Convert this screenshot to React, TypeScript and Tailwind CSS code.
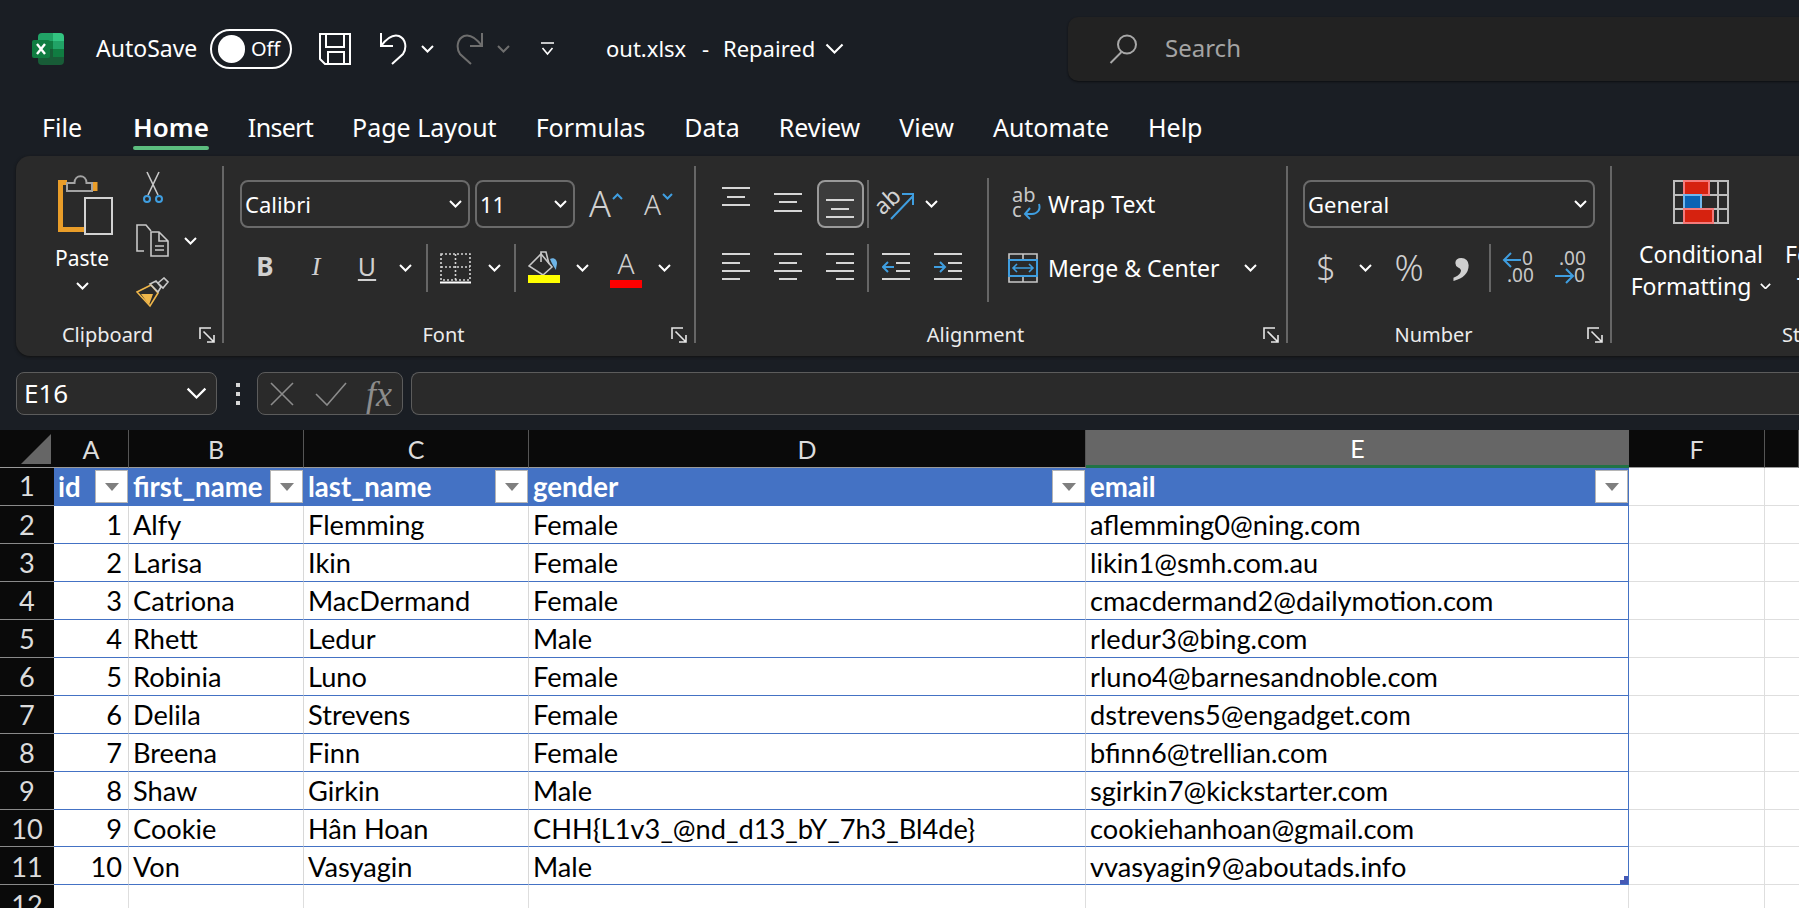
import React from "react";

const rows = [
  ["1", "Alfy", "Flemming", "Female", "aflemming0@ning.com"],
  ["2", "Larisa", "Ikin", "Female", "likin1@smh.com.au"],
  ["3", "Catriona", "MacDermand", "Female", "cmacdermand2@dailymotion.com"],
  ["4", "Rhett", "Ledur", "Male", "rledur3@bing.com"],
  ["5", "Robinia", "Luno", "Female", "rluno4@barnesandnoble.com"],
  ["6", "Delila", "Strevens", "Female", "dstrevens5@engadget.com"],
  ["7", "Breena", "Finn", "Female", "bfinn6@trellian.com"],
  ["8", "Shaw", "Girkin", "Male", "sgirkin7@kickstarter.com"],
  ["9", "Cookie", "Hân Hoan", "CHH{L1v3_@nd_d13_bY_7h3_Bl4de}", "cookiehanhoan@gmail.com"],
  ["10", "Von", "Vasyagin", "Male", "vvasyagin9@aboutads.info"],
];

const headers = ["id", "first_name", "last_name", "gender", "email"];
const columns = ["A", "B", "C", "D", "E", "F", ""];
const tabs = ["Insert", "Page Layout", "Formulas", "Data", "Review", "View", "Automate", "Help"];

const Chevron = ({ className = "text-white", w = 13 }: { className?: string; w?: number }) => (
  <svg width={w} height={(w * 8) / 13} viewBox="0 0 13 8" fill="none" stroke="currentColor" strokeWidth={w > 13 ? 1.4 : 2} className={className}>
    <path d="M1 1l5.5 5.5L12 1" />
  </svg>
);

const Launcher = () => (
  <svg width="16" height="16" viewBox="0 0 16 16" fill="none" stroke="#e6e6e6" strokeWidth="1.6">
    <path d="M1 12V1h11M4.5 4.5L15 15M15 8v7H8" />
  </svg>
);

const ExcelLogo = () => (
  <svg width="32" height="32" viewBox="0 0 32 32">
    <path d="M10 0h11v8H6V4a4 4 0 0 1 4-4z" fill="#21a366" />
    <path d="M21 0h7a4 4 0 0 1 4 4v4H21z" fill="#33c481" />
    <rect x="6" y="8" width="15" height="8" fill="#107c41" />
    <rect x="21" y="8" width="11" height="8" fill="#21a366" />
    <rect x="6" y="16" width="15" height="8" fill="#185c37" />
    <rect x="21" y="16" width="11" height="8" fill="#107c41" />
    <path d="M6 24h26v4a4 4 0 0 1-4 4H10a4 4 0 0 1-4-4z" fill="#185c37" />
    <rect x="0" y="7" width="18" height="18" rx="2" fill="#107c41" />
    <path d="M5 11l8 10M13 11l-8 10" stroke="#fff" strokeWidth="2.4" />
  </svg>
);

const SaveIcon = () => (
  <svg width="32" height="32" viewBox="0 0 32 32" fill="none" stroke="#fff" strokeWidth="2">
    <path d="M1 1h30v30H6l-5-5zM7 1v13h18V1M9 31V19h16v12" />
  </svg>
);

const UndoIcon = ({ color, flip }: { color: string; flip?: boolean }) => (
  <svg width="28" height="33" viewBox="0 0 28 33" fill="none" stroke={color} strokeWidth="2" className={flip ? "-scale-x-100" : ""}>
    <path d="M2 1v13h12M2 14C8 6 14 2 20 4c7 3 8 12 4 18L13 32" />
  </svg>
);

const CustomizeIcon = () => (
  <svg width="15" height="14" viewBox="0 0 15 14" fill="none" stroke="#fff" strokeWidth="1.6">
    <path d="M1 1h13M2.5 6l5 6 5-6" />
  </svg>
);

const SearchIcon = () => (
  <svg width="28" height="30" viewBox="0 0 28 30" fill="none" stroke="#a8a8a8" strokeWidth="2">
    <circle cx="18" cy="10.5" r="9" />
    <path d="M12.5 18L1.5 29" />
  </svg>
);

const PasteIcon = () => (
  <svg width="56" height="62" viewBox="0 0 56 62" fill="none">
    <path d="M9 8.5H2.5v47H26" stroke="#e99d29" strokeWidth="5" />
    <path d="M37 8v9" stroke="#e99d29" strokeWidth="5" />
    <path d="M9 17V9h7.5c0-9 12-9 12 0H34v8z" stroke="#a3a3a3" strokeWidth="2" />
    <rect x="27" y="24" width="27" height="36" stroke="#d2d2d2" strokeWidth="2" />
  </svg>
);

const ScissorsIcon = () => (
  <svg width="22" height="33" viewBox="0 0 22 33" fill="none">
    <path d="M5 1l11 23M17 1L6 24" stroke="#c8c8c8" strokeWidth="1.6" />
    <circle cx="5" cy="28" r="3" stroke="#3f9ee0" strokeWidth="2" />
    <circle cx="17" cy="28" r="3" stroke="#3f9ee0" strokeWidth="2" />
  </svg>
);

const CopyIcon = () => (
  <svg width="33" height="33" viewBox="0 0 33 33" fill="none" stroke="#c8c8c8" strokeWidth="1.6">
    <path d="M8 27H1V1h9l5 6" />
    <path d="M15 8h8l9 9v15H15zM23 8v9h9" />
    <path d="M19 22h9M19 26h9" />
  </svg>
);

const BrushIcon = () => (
  <svg width="33" height="31" viewBox="0 0 33 31" fill="none">
    <path d="M1 15l14-7 7 8-8 13z" fill="#2a2a2a" stroke="#efb64a" strokeWidth="1.6" />
    <path d="M5 17l12 0-4 11z" fill="#efb64a" />
    <path d="M14 7l6-3 5 6-3 5zM22 6l6-5 4 4-5 6z" stroke="#c8c8c8" strokeWidth="1.6" />
  </svg>
);

const BorderIcon = () => (
  <svg width="31" height="31" viewBox="0 0 31 31" fill="none">
    <path d="M1 1h29v26H1zM1 14h29M15.5 1v26" stroke="#d4d4d4" strokeWidth="1.6" strokeDasharray="2 2" />
    <path d="M0 29.5h31" stroke="#fff" strokeWidth="2" />
  </svg>
);

const FillIcon = () => (
  <svg width="32" height="34" viewBox="0 0 32 34" fill="none">
    <path d="M1 15L13 3l11 13-9 8z" stroke="#c8c8c8" strokeWidth="1.6" />
    <path d="M13 11V1h5l3 12" stroke="#c8c8c8" strokeWidth="1.6" />
    <path d="M22 8c4-2 7 1 7 4 0 2-1 4-1 7-2-3-4-6-6-11z" fill="#6eb4e6" />
    <rect y="24" width="32" height="8" fill="#ffff00" />
  </svg>
);

const AlignIcon = ({ lines }: { lines: [number, number, number][] }) => (
  <svg width="28" height="48" viewBox="0 0 28 48" stroke="#d6d6d6" strokeWidth="2">
    {lines.map(([a, b, y]) => (
      <path key={y} d={`M${a} ${y}H${b}`} />
    ))}
  </svg>
);

const IndentIcon = ({ out }: { out?: boolean }) => (
  <svg width="28" height="48" viewBox="0 0 28 48" fill="none">
    <path d="M0 10h28M14 19h14M14 27h14M0 35h28" stroke="#d6d6d6" strokeWidth="2" />
    <path d={out ? "M12 23H1M6 18l-5 5 5 5" : "M0 23h11M6 18l5 5-5 5"} stroke="#3f9ee0" strokeWidth="2" />
  </svg>
);

const OrientIcon = () => (
  <svg width="36" height="36" viewBox="0 0 36 36" fill="none" className="overflow-visible">
    <text x="-3" y="21" transform="rotate(-42 12 17)" fontSize="23" fill="#d2d2d2" fontFamily="Noto Sans, sans-serif">ab</text>
    <path d="M12 33L34 10M23 8h11v11" stroke="#3f9ee0" strokeWidth="2" />
  </svg>
);

const WrapIcon = () => (
  <svg width="30" height="34" viewBox="0 0 30 34" fill="none" className="overflow-visible">
    <text x="0" y="15" fontSize="20" fill="#c8c8c8" fontFamily="Noto Sans, sans-serif">ab</text>
    <text x="0" y="30" fontSize="20" fill="#c8c8c8" fontFamily="Noto Sans, sans-serif">c</text>
    <path d="M27 17c2 6-2 10-7 10h-6M18 21l-5 6 5 5" stroke="#3f9ee0" strokeWidth="2" />
  </svg>
);

const MergeIcon = () => (
  <svg width="30" height="30" viewBox="0 0 30 30" fill="none">
    <path d="M1 1h28v28H1zM15 1v6M15 23v6" stroke="#c8c8c8" strokeWidth="1.6" />
    <rect x="1" y="7" width="28" height="16" stroke="#3f9ee0" strokeWidth="2" fill="#2a2a2a" />
    <path d="M5 15h20M9 11l-4 4 4 4M21 11l4 4-4 4" stroke="#3f9ee0" strokeWidth="1.6" />
  </svg>
);

const DecimalIcon = ({ more }: { more?: boolean }) => (
  <svg width="32" height="36" viewBox="0 0 32 36" fill="none" className="overflow-visible">
    <text x={more ? 5 : 20} y="15" fontSize="19" fill="#c8c8c8" fontFamily="Noto Sans, sans-serif">{more ? ".00" : "0"}</text>
    <text x={more ? 20 : 5} y="32" fontSize="19" fill="#c8c8c8" fontFamily="Noto Sans, sans-serif">{more ? "0" : ".00"}</text>
    {more ? (
      <path d="M1 26h17M12 19l7 7-7 7" stroke="#3f9ee0" strokeWidth="2" />
    ) : (
      <path d="M19 10H2M9 3l-7 7 7 7" stroke="#3f9ee0" strokeWidth="2" />
    )}
  </svg>
);

const ConditionalIcon = () => (
  <svg width="56" height="44" viewBox="0 0 56 44" fill="none">
    <path d="M1 1h54v42H1zM1 15h54M1 29h54M11 1v42M27 1v42M45 1v42" stroke="#bdbdbd" strokeWidth="2" />
    <rect x="11" y="1" width="25" height="14" fill="#d6220f" stroke="#f47a7a" strokeWidth="2" />
    <rect x="11" y="15" width="17" height="14" fill="#0a63b4" stroke="#6fb7ee" strokeWidth="2" />
    <rect x="11" y="29" width="29" height="14" fill="#d6220f" stroke="#f47a7a" strokeWidth="2" />
  </svg>
);

const FilterButton = () => (
  <div className="ml-auto mr-[1px] flex h-[33px] w-[33px] shrink-0 items-center justify-center border border-[#b5b5b5] bg-white">
    <div className="h-0 w-0 border-x-[7px] border-t-[8px] border-x-transparent border-t-[#7f7f7f]" />
  </div>
);

const Separator = ({ className = "" }: { className?: string }) => <div className={`w-[2px] bg-[#666666] ${className}`} />;
const GroupDivider = () => <div className="mb-[13px] mt-[10px] w-[2px] shrink-0 bg-[#666666]" />;

const GroupFooter = ({ label, labelClass = "mr-[24px]" }: { label: string; labelClass?: string }) => (
  <div className="mt-auto mb-[13px] grid grid-cols-[1fr_auto_1fr] items-end pr-[7px] text-[20px] leading-[24px] text-[#ececec]">
    <div />
    <span className={`mb-[-4px] ${labelClass}`}>{label}</span>
    <div className="justify-self-end">
      <Launcher />
    </div>
  </div>
);

const Combo = ({ label, className }: { label: string; className: string }) => (
  <div className={`flex h-[48px] items-center justify-between rounded-[8px] border-2 border-[#6a6a6a] pl-[3px] pr-[6px] text-[22px] text-white ${className}`}>
    <span>{label}</span>
    <Chevron />
  </div>
);

const Box = ({ className, children }: { className: string; children?: React.ReactNode }) => (
  <div className={`flex h-[48px] shrink-0 items-center justify-center ${className}`}>{children}</div>
);

export default function App() {
  return (
    <div className="flex h-[908px] w-[1799px] flex-col overflow-hidden bg-[#1a1e24] font-['Noto_Sans',sans-serif]">
      {/* Title bar */}
      <div className="flex h-[97px] shrink-0 items-center pl-[32px] text-white">
        <ExcelLogo />
        <span className="ml-[32px] w-[114px] text-[23px]">AutoSave</span>
        <div className="flex h-[40px] w-[82px] items-center rounded-full border-2 border-white pl-[6px]">
          <div className="h-[28px] w-[27px] rounded-full bg-white" />
          <span className="ml-[6px] text-[20px]">Off</span>
        </div>
        <div className="ml-[27px]"><SaveIcon /></div>
        <div className="ml-[28px]"><UndoIcon color="#ffffff" /></div>
        <div className="ml-[14px]"><Chevron /></div>
        <div className="ml-[22px]"><UndoIcon color="#6e6e6e" flip /></div>
        <div className="ml-[13px]"><Chevron className="text-[#6e6e6e]" /></div>
        <div className="ml-[30px]"><CustomizeIcon /></div>
        <span className="ml-[51px] w-[96px] text-[22px]">out.xlsx</span>
        <span className="w-[21px] text-[22px]">-</span>
        <span className="w-[102px] text-[22px]">Repaired</span>
        <Chevron w={19} />
        <div className="ml-[224px] flex h-[64px] flex-1 items-center rounded-l-[10px] bg-[#222222] pl-[41px] shadow-[0_1px_2px_#0d0f12]">
          <SearchIcon />
          <span className="ml-[28px] mt-[-2px] text-[24px] text-[#a4a4a4]">Search</span>
        </div>
      </div>

      {/* Tabs */}
      <div className="flex h-[59px] shrink-0 items-start gap-[39px] pl-[42px] text-[25px] leading-[60px] text-white">
        <span className="mr-[12px]">File</span>
        <div className="relative text-[26px] font-semibold">
          Home
          <div className="absolute bottom-[7px] left-0 right-0 h-[4px] rounded-full bg-[#5cbd7f]" />
        </div>
        {tabs.map((tab) => (
          <span key={tab} className={tab === "Insert" ? "tracking-[-0.7px]" : ""}>{tab}</span>
        ))}
      </div>

      {/* Ribbon */}
      <div className="ml-[16px] flex h-[200px] shrink-0 rounded-l-[14px] bg-[#2a2a2a] shadow-[0_1px_3px_#111]">
        {/* Clipboard */}
        <div className="flex w-[206px] shrink-0 flex-col">
          <div className="flex">
            <div className="ml-[22px] flex w-[88px] flex-col items-center pl-[8px] pt-[18px]">
              <PasteIcon />
              <span className="ml-[-8px] mt-[6px] text-[21px] leading-[32px] text-white">Paste</span>
              <div className="ml-[-8px] mt-[8px]"><Chevron /></div>
            </div>
            <div className="ml-[10px] flex flex-col pt-[15px]">
              <div className="ml-[6px]"><ScissorsIcon /></div>
              <div className="mt-[20px] flex items-center">
                <CopyIcon />
                <div className="ml-[15px]"><Chevron /></div>
              </div>
              <div className="mt-[20px]"><BrushIcon /></div>
            </div>
          </div>
          <GroupFooter label="Clipboard" labelClass="mr-[16px]" />
        </div>
        <GroupDivider />

        {/* Font */}
        <div className="flex w-[470px] shrink-0 flex-col">
          <div className="flex items-center pl-[16px] pt-[24px]">
            <Combo label="Calibri" className="w-[230px]" />
            <Combo label="11" className="ml-[5px] w-[100px]" />
            <div className="ml-[14px] flex h-[48px] w-[48px] items-center text-[36px] font-light text-[#d0d0d0]">
              A
              <svg width="11" height="7" viewBox="0 0 11 7" fill="none" stroke="#3f9ee0" strokeWidth="2" className="mb-[16px] ml-[1px]"><path d="M1 6l4.5-4.5L10 6" /></svg>
            </div>
            <div className="ml-[7px] flex h-[48px] items-center text-[28px] font-light text-[#d0d0d0]">
              A
              <svg width="11" height="7" viewBox="0 0 11 7" fill="none" stroke="#3f9ee0" strokeWidth="2" className="mb-[16px] ml-[1px]"><path d="M1 1l4.5 4.5L10 1" /></svg>
            </div>
          </div>
          <div className="mt-[16px] flex pl-[16px] text-[#d0d0d0]">
            <Box className="w-[50px] text-[26px] font-bold"><span className="mt-[-3px]">B</span></Box>
            <Box className="w-[52px] font-['Liberation_Serif',serif] text-[26px] italic"><span className="mt-[-3px]">I</span></Box>
            <Box className="w-[50px] text-[25px] underline underline-offset-[3px]"><span className="mt-[-3px]">U</span></Box>
            <Box className="w-[26px]"><Chevron /></Box>
            <Separator className="ml-[8px]" />
            <Box className="w-[54px]"><BorderIcon /></Box>
            <Box className="w-[24px]"><Chevron /></Box>
            <Separator className="ml-[8px]" />
            <Box className="w-[56px]"><FillIcon /></Box>
            <Box className="w-[20px]"><Chevron /></Box>
            <div className="ml-[6px] flex h-[48px] w-[56px] flex-col items-center">
              <span className="mt-[2px] h-[28px] text-[28px] font-light leading-[34px]">A</span>
              <div className="mt-[6px] h-[8px] w-[32px] bg-[#ff0000]" />
            </div>
            <Box className="w-[20px]"><Chevron /></Box>
          </div>
          <GroupFooter label="Font" />
        </div>
        <GroupDivider />

        {/* Alignment */}
        <div className="flex w-[590px] shrink-0 flex-col">
          <div className="flex pt-[22px]">
            <div className="flex w-[291px] flex-col pt-[2px]">
              <div className="flex pl-[14px]">
                <Box className="w-[52px]"><AlignIcon lines={[[0, 28, 8], [5, 23, 17], [0, 28, 25]]} /></Box>
                <Box className="w-[52px]"><AlignIcon lines={[[0, 28, 14], [5, 23, 22], [0, 28, 31]]} /></Box>
                <Box className="w-[52px]">
                  <div className="flex h-[48px] w-[47px] items-center justify-center rounded-[8px] border-2 border-[#9a9a9a] bg-[#3c3c3c]">
                    <AlignIcon lines={[[0, 28, 20], [5, 23, 29], [0, 28, 37]]} />
                  </div>
                </Box>
                <Separator className="ml-[1px]" />
                <Box className="ml-[9px] w-[38px]"><OrientIcon /></Box>
                <Box className="ml-[5px] w-[20px]"><Chevron /></Box>
              </div>
              <div className="mt-[16px] flex pl-[14px]">
                <Box className="w-[52px]"><AlignIcon lines={[[0, 28, 10], [0, 18, 19], [0, 28, 27], [0, 18, 35]]} /></Box>
                <Box className="w-[52px]"><AlignIcon lines={[[0, 28, 10], [5, 23, 19], [0, 28, 27], [5, 23, 35]]} /></Box>
                <Box className="w-[52px]"><AlignIcon lines={[[0, 28, 10], [10, 28, 19], [0, 28, 27], [10, 28, 35]]} /></Box>
                <Separator className="ml-[1px]" />
                <Box className="ml-[1px] w-[52px]"><IndentIcon out /></Box>
                <Box className="w-[52px]"><IndentIcon /></Box>
              </div>
            </div>
            <Separator className="h-[124px]" />
            <div className="flex flex-col pt-[2px] text-[23px] text-white">
              <div className="flex h-[48px] items-center pl-[23px]">
                <WrapIcon />
                <span className="ml-[6px] mt-[1px]">Wrap Text</span>
              </div>
              <div className="mt-[16px] flex h-[48px] items-center pl-[19px]">
                <MergeIcon />
                <span className="ml-[10px] mt-[1px]">Merge &amp; Center</span>
                <div className="ml-[24px]"><Chevron /></div>
              </div>
            </div>
          </div>
          <GroupFooter label="Alignment" />
        </div>
        <GroupDivider />

        {/* Number */}
        <div className="flex w-[322px] shrink-0 flex-col">
          <div className="pl-[15px] pt-[24px]">
            <Combo label="General" className="w-[292px]" />
          </div>
          <div className="mt-[16px] flex pl-[15px] text-[#d0d0d0]">
            <Box className="w-[46px] text-[34px] font-light">$</Box>
            <Box className="w-[32px]"><Chevron /></Box>
            <Box className="w-[56px] text-[36px] font-light">%</Box>
            <Box className="w-[50px] font-['Liberation_Serif',serif] text-[76px] font-bold">
              <span className="mt-[-46px] h-[48px] -translate-y-[16px] leading-none">,</span>
            </Box>
            <Separator className="ml-[2px]" />
            <Box className="w-[54px]"><DecimalIcon /></Box>
            <Box className="w-[50px]"><DecimalIcon more /></Box>
          </div>
          <GroupFooter label="Number" />
        </div>
        <GroupDivider />

        {/* Styles */}
        <div className="flex min-w-0 flex-1 flex-col overflow-hidden">
          <div className="flex whitespace-nowrap pt-[24px] text-[23px] leading-[32px] text-white">
            <div className="ml-[9px] flex w-[160px] shrink-0 flex-col items-center">
              <ConditionalIcon />
              <span className="mt-[14px]">Conditional</span>
              <div className="flex items-center">
                Formatting
                <div className="ml-[9px]"><Chevron w={11} /></div>
              </div>
            </div>
            <div className="ml-[4px] flex shrink-0 flex-col pt-[58px]">
              <span>Format as</span>
              <span className="pl-[12px]">Table</span>
            </div>
          </div>
          <div className="mt-auto mb-[9px] pl-[170px] text-[20px] leading-[24px] text-[#ececec]">Styles</div>
        </div>
      </div>

      {/* Formula bar */}
      <div className="flex h-[74px] shrink-0 items-center pt-[1px] pl-[16px]">
        <div className="flex h-[43px] w-[201px] shrink-0 items-center justify-between rounded-[8px] border border-[#5c5c5c] bg-[#2a2a2a] pl-[7px] pr-[9px] text-[26px] text-white">
          <span>E16</span>
          <Chevron w={21} />
        </div>
        <div className="ml-[19px] flex w-[4px] flex-col gap-[5px]">
          <div className="h-[4px] bg-[#d8d8d8]" />
          <div className="h-[4px] bg-[#d8d8d8]" />
          <div className="h-[4px] bg-[#d8d8d8]" />
        </div>
        <div className="ml-[17px] flex h-[43px] w-[146px] shrink-0 items-center rounded-[8px] border border-[#5c5c5c] bg-[#2a2a2a] pl-[12px] text-[#8c8c8c]">
          <svg width="24" height="24" viewBox="0 0 24 24" fill="none" stroke="currentColor" strokeWidth="1.6"><path d="M1 1l22 22M23 1L1 23" /></svg>
          <svg width="32" height="24" viewBox="0 0 32 24" fill="none" stroke="currentColor" strokeWidth="1.6" className="ml-[21px]"><path d="M1 12l11 11L31 1" /></svg>
          <span className="ml-[19px] font-['Liberation_Serif',serif] text-[36px] italic leading-none">fx</span>
        </div>
        <div className="ml-[8px] h-[43px] flex-1 rounded-l-[8px] border border-r-0 border-[#5c5c5c] bg-[#2a2a2a]" />
      </div>

      {/* Sheet */}
      <div className="grid flex-1 auto-rows-[37.96px] grid-cols-[54px_75px_175px_225px_557px_543px_136px_34px] content-start bg-white font-['Lato',sans-serif] text-[27.2px] text-black">
        <div className="flex items-end justify-end border-b border-[#9a9a9a] bg-[#0a0a0a] pb-[3px] pr-[3px]">
          <div className="h-0 w-0 border-b-[30px] border-l-[30px] border-b-[#666666] border-l-transparent" />
        </div>
        {columns.map((col, i) => (
          <div
            key={i}
            className={
              col === "E"
                ? "flex items-center justify-center border-b-[3px] border-[#217346] bg-[#666666] pt-[2px] text-[25px] text-white"
                : "flex items-center justify-center border-b border-r border-b-[#9a9a9a] border-r-[#555555] bg-[#0a0a0a] pt-[2px] text-[25px] text-[#dcdcdc]"
            }
          >
            {col}
          </div>
        ))}

        <div className="flex items-center justify-center border-b border-[#8a8a8a] bg-[#0a0a0a] text-[#dcdcdc]">1</div>
        {headers.map((h) => (
          <div key={h} className="flex items-center bg-[#4472c4] pl-[4px] text-[27.6px] font-bold text-white">
            <span className="mt-[-1px]">{h}</span>
            <FilterButton />
          </div>
        ))}
        <div className="border-b border-r border-[#dedede] bg-white" />
        <div className="border-b border-[#dedede] bg-white" />

        {rows.map((row, r) => (
          <React.Fragment key={r}>
            <div className="flex items-center justify-center border-b border-[#8a8a8a] bg-[#0a0a0a] pt-[2px] text-[#dcdcdc]">{r + 2}</div>
            <div className="flex items-center justify-end border-b border-r border-b-[#4472c4] border-r-[#d8d8d8] bg-white pr-[6px] pt-[2px]">{row[0]}</div>
            <div className="flex items-center border-b border-r border-b-[#4472c4] border-r-[#d8d8d8] bg-white pl-[4px] pt-[2px]">{row[1]}</div>
            <div className="flex items-center border-b border-r border-b-[#4472c4] border-r-[#d8d8d8] bg-white pl-[4px] pt-[2px]">{row[2]}</div>
            <div className="flex items-center border-b border-r border-b-[#4472c4] border-r-[#d8d8d8] bg-white pl-[4px] pt-[2px]">{row[3]}</div>
            <div className="relative flex items-center border-b border-r border-[#4472c4] bg-white pl-[4px] pt-[2px]">
              {row[4]}
              {r === 9 && (
                <svg width="8" height="8" viewBox="0 0 8 8" className="absolute bottom-0 right-0" fill="#4659b5"><path d="M4 0h4v8H0V4h4z" /></svg>
              )}
            </div>
            <div className="border-b border-r border-[#dedede] bg-white" />
            <div className="border-b border-[#dedede] bg-white" />
          </React.Fragment>
        ))}

        <div className="flex items-center justify-center bg-[#0a0a0a] pt-[2px] text-[#dcdcdc]">12</div>
        <div className="border-r border-[#dedede] bg-white" />
        <div className="border-r border-[#dedede] bg-white" />
        <div className="border-r border-[#dedede] bg-white" />
        <div className="border-r border-[#dedede] bg-white" />
        <div className="border-r border-[#dedede] bg-white" />
        <div className="border-r border-[#dedede] bg-white" />
        <div className="bg-white" />
      </div>
    </div>
  );
}
